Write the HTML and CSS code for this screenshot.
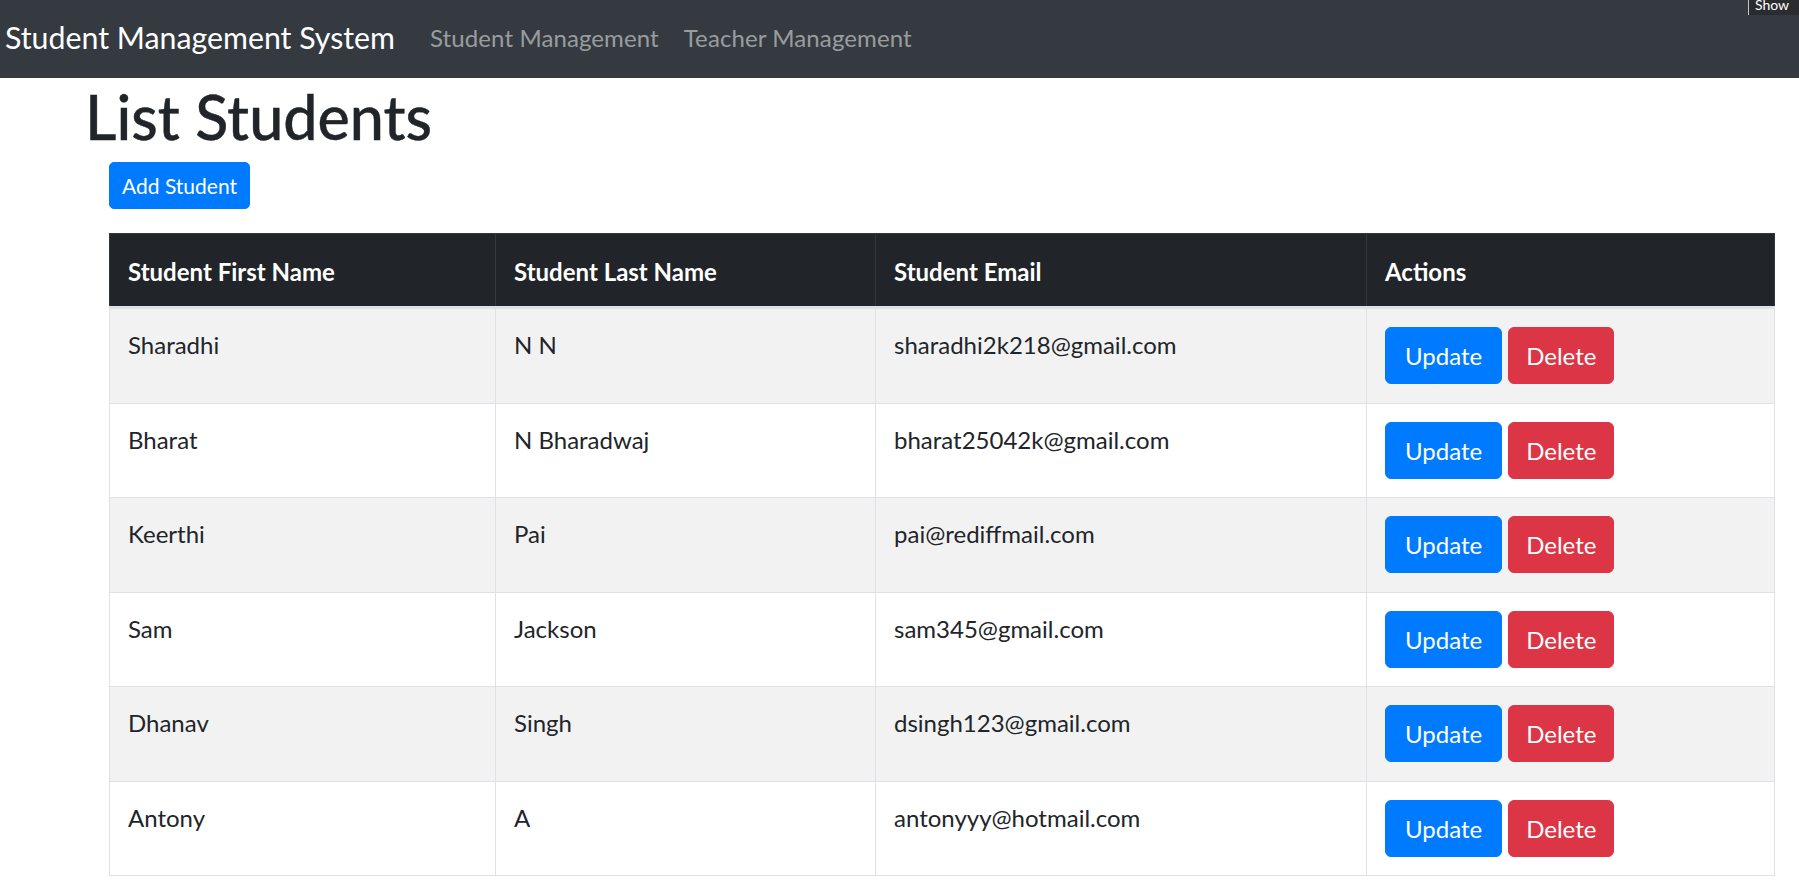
FILE: index.html
```html
<!DOCTYPE html>
<html lang="en">
<head>
<meta charset="utf-8">
<title>Student Management System</title>
<link rel="stylesheet" href="styles.css">
</head>
<body>
<header class="navbar">
  <a class="brand" href="#">Student Management System</a>
  <nav class="nav-links">
    <a class="nav-link" href="#">Student Management</a>
    <a class="nav-link" href="#">Teacher Management</a>
  </nav>
  <div class="corner-tab">Show</div>
</header>
<main class="container">
  <h1 class="page-title">List Students</h1>
  <div class="content">
    <div class="toolbar">
      <button class="btn btn-primary btn-sm">Add Student</button>
    </div>
    <table class="table">
      <colgroup>
        <col class="c1"><col class="c2"><col class="c3"><col class="c4">
      </colgroup>
      <thead>
        <tr>
          <th>Student First Name</th>
          <th>Student Last Name</th>
          <th>Student Email</th>
          <th>Actions</th>
        </tr>
      </thead>
      <tbody>
        <tr>
          <td>Sharadhi</td><td>N N</td><td>sharadhi2k218@gmail.com</td>
          <td><div class="actions"><button class="btn btn-primary">Update</button><button class="btn btn-danger">Delete</button></div></td>
        </tr>
        <tr>
          <td>Bharat</td><td>N Bharadwaj</td><td>bharat25042k@gmail.com</td>
          <td><div class="actions"><button class="btn btn-primary">Update</button><button class="btn btn-danger">Delete</button></div></td>
        </tr>
        <tr>
          <td>Keerthi</td><td>Pai</td><td>pai@rediffmail.com</td>
          <td><div class="actions"><button class="btn btn-primary">Update</button><button class="btn btn-danger">Delete</button></div></td>
        </tr>
        <tr>
          <td>Sam</td><td>Jackson</td><td>sam345@gmail.com</td>
          <td><div class="actions"><button class="btn btn-primary">Update</button><button class="btn btn-danger">Delete</button></div></td>
        </tr>
        <tr>
          <td>Dhanav</td><td>Singh</td><td>dsingh123@gmail.com</td>
          <td><div class="actions"><button class="btn btn-primary">Update</button><button class="btn btn-danger">Delete</button></div></td>
        </tr>
        <tr>
          <td>Antony</td><td>A</td><td>antonyyy@hotmail.com</td>
          <td><div class="actions"><button class="btn btn-primary">Update</button><button class="btn btn-danger">Delete</button></div></td>
        </tr>
      </tbody>
    </table>
  </div>
</main>
</body>
</html>
```
FILE: styles.css
```css
* { box-sizing: border-box; }

html, body {
  margin: 0;
  padding: 0;
  background: #fff;
  color: #212529;
  font-family: Lato, "Noto Sans", "Liberation Sans", sans-serif;
  font-size: 24px;
  line-height: 1.5;
}

.navbar {
  position: relative;
  height: 78px;
  background: #343a40;
  display: flex;
  align-items: center;
  padding: 0 0 3px 5px;
}

.brand {
  color: #fff;
  text-decoration: none;
  font-size: 30.3px;
  line-height: 45px;
  margin-right: 35px;
}

.nav-links {
  display: flex;
  gap: 25px;
}

.nav-link {
  color: rgba(255, 255, 255, 0.5);
  text-decoration: none;
  font-size: 24px;
  line-height: 36px;
  letter-spacing: 0.1px;
}

.corner-tab {
  position: absolute;
  top: 0;
  left: 1748px;
  width: 51px;
  height: 15px;
  overflow: hidden;
  background: #2a2c30;
  border-left: 1px solid #c8c8c8;
  color: #fff;
  font-size: 14px;
  line-height: 10px;
  padding-left: 6px;
}

.container {
  padding: 3px 25px 0 85px;
}

.page-title {
  margin: 0 0 9px 0;
  font-size: 61px;
  line-height: 72px;
  font-weight: 500;
  -webkit-text-stroke: 0.4px #212529;
}

.content {
  padding-left: 24px;
}

.toolbar {
  margin-bottom: 24px;
}

.btn {
  display: inline-block;
  border: 1px solid transparent;
  border-radius: 6px;
  color: #fff;
  font-family: inherit;
  font-size: 24px;
  line-height: 55px;
  height: 57px;
  padding: 0 19px;
  cursor: pointer;
}

.btn-danger {
  padding: 0 17px;
}

.btn-sm {
  font-size: 21px;
  line-height: 45px;
  height: 47px;
  padding: 0 12px;
  border-radius: 5px;
}

.btn-primary { background: #007bff; border-color: #007bff; }
.btn-danger { background: #dc3545; border-color: #dc3545; }

.table {
  width: 1665px;
  table-layout: fixed;
  border-collapse: collapse;
  border: 1px solid #dee2e6;
}

.c1 { width: 386px; }
.c2 { width: 380px; }
.c3 { width: 491px; }
.c4 { width: 408px; }

.table th,
.table td {
  text-align: left;
  vertical-align: top;
  padding: 18px 18px 18.5px;
  line-height: 36px;
  border: 1px solid #dee2e6;
}

.table thead th {
  background: #212529;
  color: #fff;
  font-weight: 700;
  border-color: #32383e;
  border-bottom: 3px solid #dee2e6;
  padding: 20px 18px 16px;
}

.table tbody tr:nth-child(odd) td {
  background: #f2f2f2;
}

.actions {
  display: flex;
  gap: 6px;
}
```
